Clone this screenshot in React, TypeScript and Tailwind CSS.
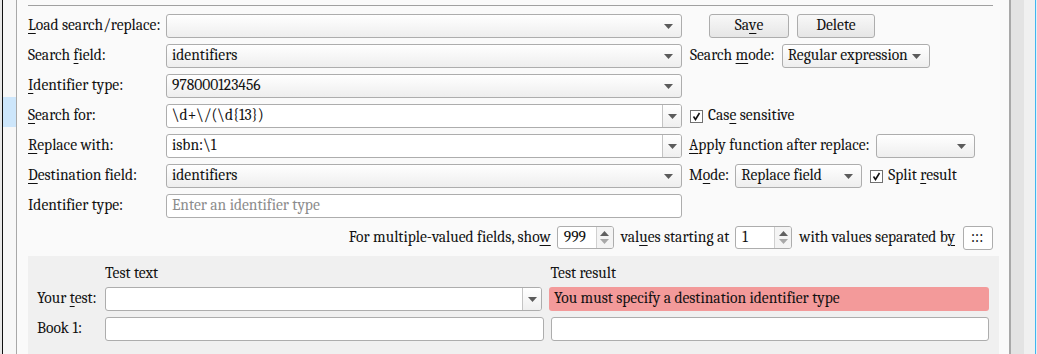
import React from "react";

const Arrow = ({ color = "#5b5b5b" }: { color?: string }) => (
  <svg width="9" height="5" viewBox="0 0 9 5">
    <path d="M0 0h9L4.5 5z" fill={color} />
  </svg>
);

const U = ({ children }: { children: React.ReactNode }) => (
  <span className="underline underline-offset-[3px] decoration-1">{children}</span>
);

type ComboProps = { value?: string; className?: string; editable?: boolean };

function Combo({ value = "", className = "", editable }: ComboProps) {
  if (editable) {
    return (
      <div className={`flex h-[24px] border border-[#adadad] rounded-[3px] bg-white overflow-hidden ${className}`}>
        <div className="flex-1 pl-[5px] flex items-center whitespace-nowrap">{value}</div>
        <div className="w-[19px] border-l border-[#c4c4c4] bg-linear-to-b from-white to-[#efefef] flex items-center justify-center">
          <Arrow />
        </div>
      </div>
    );
  }
  return (
    <div className={`flex items-center h-[24px] border border-[#adadad] rounded-[3px] bg-linear-to-b from-white to-[#eeeeee] pl-[5px] pr-[8px] ${className}`}>
      <div className="flex-1 whitespace-nowrap">{value}</div>
      <Arrow />
    </div>
  );
}

function Input({ value = "", placeholder, className = "" }: { value?: string; placeholder?: string; className?: string }) {
  return (
    <div className={`flex items-center h-[24px] border border-[#adadad] rounded-[3px] bg-white pl-[5px] whitespace-nowrap ${className}`}>
      {value ? value : <span className="text-[#8c8c8c]">{placeholder}</span>}
    </div>
  );
}

function Spin({ value }: { value: string }) {
  return (
    <div className="flex h-[23px] w-[57px] border border-[#adadad] rounded-[3px] bg-white overflow-hidden">
      <div className="flex-1 pl-[6px] flex items-center">{value}</div>
      <div className="w-[17px] border-l border-[#d0d0d0] bg-[#f4f4f4] flex flex-col items-center justify-center gap-[3px]">
        <svg width="9" height="5" viewBox="0 0 9 5"><path d="M0 5h9L4.5 0z" fill="#606060" /></svg>
        <svg width="9" height="5" viewBox="0 0 9 5"><path d="M0 0h9L4.5 5z" fill="#a8a8a8" /></svg>
      </div>
    </div>
  );
}

function Check({ children }: { children: React.ReactNode }) {
  return (
    <div className="flex items-center gap-[5px]">
      <div className="w-[13px] h-[13px] border border-[#707070] bg-white flex items-center justify-center">
        <svg width="9" height="9" viewBox="0 0 9 9">
          <path d="M1.5 4.5l2 3 4-6.5" stroke="#111" strokeWidth="1.6" fill="none" />
        </svg>
      </div>
      <span>{children}</span>
    </div>
  );
}

function Button({ children, className = "" }: { children: React.ReactNode; className?: string }) {
  return (
    <div className={`h-[24px] flex items-center justify-center border border-[#adadad] rounded-[3px] bg-linear-to-b from-[#f8f8f8] to-[#e6e6e6] ${className}`}>
      {children}
    </div>
  );
}

function Row({ label, children }: { label: React.ReactNode; children: React.ReactNode }) {
  return (
    <div className="flex items-center h-[24px] mt-[6px]">
      <div className="w-[138px] shrink-0 whitespace-nowrap">{label}</div>
      {children}
    </div>
  );
}

export default function App() {
  return (
    <div className="w-[1037px] h-[354px] flex overflow-hidden bg-[#fafafa] text-[#111] text-[15.5px] leading-none font-serif font-[Liberation_Serif,serif]">
      {/* window behind, left */}
      <div className="w-[2px] bg-[#e8e8e8]" />
      <div className="w-[1px] bg-[#111]" />
      <div className="w-[13px] bg-[#f7f7f7] flex flex-col">
        <div className="h-[97px]" />
        <div className="h-[30px] bg-[#cde6fb]" />
      </div>
      <div className="w-[1px] bg-[#a8a8a8]" />

      {/* dialog body */}
      <div className="flex-1 flex flex-col pl-[11px] pr-[16px] pt-[5px]">
        <div className="h-[1px] bg-[#a0a0a0] mb-[2px]" />

        <Row label={<><U>L</U>oad search/replace:</>}>
          <Combo className="w-[516px]" />
          <Button className="w-[80px] ml-[27px]">Sa<U>v</U>e</Button>
          <Button className="w-[78px] ml-[8px]">Delete</Button>
        </Row>

        <Row label={<>Search <U>f</U>ield:</>}>
          <Combo className="w-[516px]" value="identifiers" />
          <span className="ml-[8px] whitespace-nowrap">Search <U>m</U>ode:</span>
          <Combo className="w-[148px] ml-[7px]" value="Regular expression" />
        </Row>

        <Row label={<><U>I</U>dentifier type:</>}>
          <Combo className="w-[516px]" value="978000123456" />
        </Row>

        <Row label={<><U>S</U>earch for:</>}>
          <Combo editable className="w-[516px]" value="\d+\/(\d{13})" />
          <div className="ml-[8px]">
            <Check>Cas<U>e</U> sensitive</Check>
          </div>
        </Row>

        <Row label={<><U>R</U>eplace with:</>}>
          <Combo editable className="w-[516px]" value="isbn:\1" />
          <span className="ml-[7px] whitespace-nowrap"><U>A</U>pply function after replace:</span>
          <Combo className="w-[99px] ml-[6px]" />
        </Row>

        <Row label={<><U>D</U>estination field:</>}>
          <Combo className="w-[516px]" value="identifiers" />
          <span className="ml-[7px] whitespace-nowrap">M<U>o</U>de:</span>
          <Combo className="w-[127px] ml-[6px]" value="Replace field" />
          <div className="ml-[8px]">
            <Check>Split <U>r</U>esult</Check>
          </div>
        </Row>

        <Row label="Identifier type:">
          <Input className="w-[516px]" placeholder="Enter an identifier type" />
        </Row>

        <div className="flex items-center justify-end h-[23px] mt-[8px] whitespace-nowrap">
          <span>For multiple-valued fields, sho<U>w</U></span>
          <div className="ml-[6px]"><Spin value="999" /></div>
          <span className="ml-[7px]">val<U>u</U>es starting at</span>
          <div className="ml-[6px]"><Spin value="1" /></div>
          <span className="ml-[7px]">with values separated b<U>y</U></span>
          <Input className="w-[30px] h-[23px] ml-[8px] pl-[7px]" value=":::" />
        </div>

        {/* test area */}
        <div className="flex-1 mt-[7px] -mr-[6px] bg-[#f0f0f0] pl-[9px] pr-[10px] pt-[9px]">
          <div className="flex h-[17px] items-center">
            <div className="w-[68px] shrink-0" />
            <div className="flex-1">Test text</div>
            <div className="w-[7px]" />
            <div className="flex-1">Test result</div>
          </div>
          <div className="flex h-[24px] items-center mt-[5px]">
            <div className="w-[68px] shrink-0">Your <U>t</U>est:</div>
            <Combo editable className="flex-1" />
            <div className="w-[7px]" />
            <div className="flex-1 h-[24px] rounded-[3px] bg-[#f39a9a] flex items-center pl-[5px] whitespace-nowrap">
              You must specify a destination identifier type
            </div>
          </div>
          <div className="flex h-[24px] items-center mt-[6px]">
            <div className="w-[68px] shrink-0">Book 1:</div>
            <Input className="flex-1" />
            <div className="w-[7px]" />
            <Input className="flex-1" />
          </div>
        </div>
      </div>

      {/* right edge */}
      <div className="w-[2px] bg-[#a8a8a8]" />
      <div className="w-[13px] bg-[#e3e3e3]" />
      <div className="w-[11px] bg-[#f0f0f0]" />
      <div className="w-[1px] bg-[#41b6ef]" />
      <div className="w-[1px] bg-[#dff0fa]" />
    </div>
  );
}
